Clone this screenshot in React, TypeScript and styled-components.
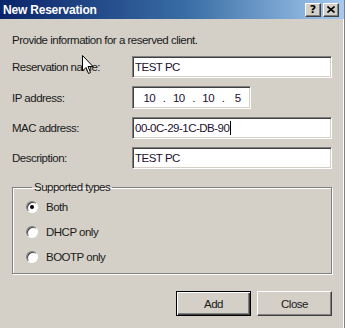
import styled, { createGlobalStyle } from "styled-components";

const GlobalStyle = createGlobalStyle`
  html, body {
    margin: 0;
    padding: 0;
    background: #d4d0c8;
  }
  body {
    font-family: "Liberation Sans", Arial, sans-serif;
  }
`;

const Window = styled.div`
  position: relative;
  box-sizing: border-box;
  display: flex;
  flex-direction: column;
  width: 345px;
  height: 328px;
  background: #d4d0c8;
  border-right: 1px solid #808080;
  box-shadow: inset -1px 0 0 #ffffff;
  overflow: hidden;
`;

const TitleBar = styled.div`
  display: flex;
  align-items: center;
  justify-content: space-between;
  height: 19px;
  padding: 0 4px 0 3px;
  background: linear-gradient(to right, #0a246a 0%, #3a6ea5 55%, #a6caf0 100%);
`;

const Title = styled.span`
  color: #ffffff;
  font-weight: bold;
  font-size: 12px;
  letter-spacing: -0.2px;
`;

const TitleButtons = styled.div`
  display: flex;
  gap: 2px;
  margin-right: 1px;
`;

const CaptionButton = styled.div`
  box-sizing: border-box;
  width: 16px;
  height: 14px;
  display: flex;
  align-items: center;
  justify-content: center;
  background: #d4d0c8;
  border-top: 1px solid #ffffff;
  border-left: 1px solid #ffffff;
  border-right: 1px solid #404040;
  border-bottom: 1px solid #404040;
  box-shadow: inset -1px -1px 0 #808080;
  font-family: "DejaVu Sans", sans-serif;
  font-weight: bold;
  font-size: 11px;
  line-height: 1;
  color: #000;
`;

const Body = styled.div`
  display: flex;
  flex-direction: column;
  padding: 14px 12px 0 12px;
  font-size: 11.5px;
  letter-spacing: -0.5px;
  color: #1a1a1a;
`;

const Intro = styled.div`
  height: 14px;
  line-height: 14px;
  margin-bottom: 9px;
`;

const Field = styled.div<{ $height?: number; $gap?: number }>`
  display: flex;
  align-items: center;
  height: ${(p) => p.$height ?? 22}px;
  margin-bottom: ${(p) => p.$gap ?? 8}px;
`;

const Label = styled.label`
  width: 120px;
  flex: none;
`;

const TextBox = styled.div<{ $width: number; $height?: number }>`
  box-sizing: border-box;
  width: ${(p) => p.$width}px;
  height: ${(p) => p.$height ?? 22}px;
  display: flex;
  align-items: center;
  padding: 0 2px;
  background: #ffffff;
  border-top: 1px solid #808080;
  border-left: 1px solid #808080;
  border-right: 1px solid #ffffff;
  border-bottom: 1px solid #ffffff;
  box-shadow: inset 1px 1px 0 #404040, inset -1px -1px 0 #d4d0c8;
  color: #1c1030;
  white-space: nowrap;
`;

const Caret = styled.span`
  display: inline-block;
  width: 1px;
  height: 14px;
  background: #000;
  margin-left: 1px;
`;

const Octet = styled.span`
  width: 21px;
  text-align: center;
`;

const Dot = styled.span`
  width: 9px;
  text-align: center;
`;

const Group = styled.fieldset`
  box-sizing: border-box;
  margin: 0;
  height: 93px;
  padding: 7px 0 0 13px;
  border: 1px solid #808080;
  box-shadow: 1px 1px 0 #ffffff, inset 1px 1px 0 #ffffff;
  display: flex;
  flex-direction: column;
  gap: 11px;
  min-inline-size: 0;
`;

const Legend = styled.legend`
  padding: 0 2px;
  margin-left: 6px;
`;

const RadioRow = styled.div`
  display: flex;
  align-items: center;
  gap: 8px;
  height: 14px;
`;

const Radio = styled.span<{ $checked?: boolean }>`
  box-sizing: border-box;
  position: relative;
  width: 12px;
  height: 12px;
  border-radius: 50%;
  background: #ffffff;
  border: 1px solid;
  border-color: #808080 #ffffff #ffffff #808080;
  box-shadow: inset 1px 1px 0 #404040;
  &::after {
    content: "";
    display: ${(p) => (p.$checked ? "block" : "none")};
    position: absolute;
    left: 3px;
    top: 3px;
    width: 4px;
    height: 4px;
    border-radius: 50%;
    background: #000;
  }
`;

const Buttons = styled.div`
  display: flex;
  justify-content: flex-end;
  gap: 6px;
  margin-top: 17px;
`;

const Button = styled.button<{ $default?: boolean }>`
  box-sizing: border-box;
  width: 75px;
  height: 25px;
  padding: 0;
  font-family: inherit;
  font-size: inherit;
  letter-spacing: inherit;
  color: #1a1a1a;
  background: #d4d0c8;
  border: 1px solid;
  border-color: ${(p) =>
    p.$default ? "#000" : "#ffffff #404040 #404040 #ffffff"};
  box-shadow: ${(p) =>
    p.$default
      ? "inset 1px 1px 0 #ffffff, inset -1px -1px 0 #404040, inset -2px -2px 0 #808080"
      : "inset -1px -1px 0 #808080"};
`;

const Cursor = styled.svg`
  position: absolute;
  left: 82px;
  top: 55px;
`;

export default function App() {
  return (
    <>
      <GlobalStyle />
      <Window>
        <TitleBar>
          <Title>New Reservation</Title>
          <TitleButtons>
            <CaptionButton>?</CaptionButton>
            <CaptionButton>
              <svg width="8" height="7" viewBox="0 0 8 7">
                <path d="M0.5 0.5 L7.5 6.5 M7.5 0.5 L0.5 6.5" stroke="#000" strokeWidth="1.6" />
              </svg>
            </CaptionButton>
          </TitleButtons>
        </TitleBar>
        <Body>
          <Intro>Provide information for a reserved client.</Intro>
          <Field>
            <Label>Reservation name:</Label>
            <TextBox $width={200}>TEST PC</TextBox>
          </Field>
          <Field $height={23}>
            <Label>IP address:</Label>
            <TextBox $width={119} $height={23}>
              <Octet style={{ marginLeft: 4 }}>10</Octet>
              <Dot>.</Dot>
              <Octet>10</Octet>
              <Dot>.</Dot>
              <Octet>10</Octet>
              <Dot>.</Dot>
              <Octet>5</Octet>
            </TextBox>
          </Field>
          <Field>
            <Label>MAC address:</Label>
            <TextBox $width={200}>
              00-0C-29-1C-DB-90
              <Caret />
            </TextBox>
          </Field>
          <Field $gap={12}>
            <Label>Description:</Label>
            <TextBox $width={200}>TEST PC</TextBox>
          </Field>
          <Group>
            <Legend>Supported types</Legend>
            <RadioRow>
              <Radio $checked />
              Both
            </RadioRow>
            <RadioRow>
              <Radio />
              DHCP only
            </RadioRow>
            <RadioRow>
              <Radio />
              BOOTP only
            </RadioRow>
          </Group>
          <Buttons>
            <Button $default>Add</Button>
            <Button>Close</Button>
          </Buttons>
        </Body>
        <Cursor width="12" height="20" viewBox="0 0 12 20">
          <path d="M0.5 0.5 L0.5 16 L4 12.5 L6.5 18.5 L8.5 17.5 L6 11.5 L11 11.5 Z" fill="#fff" stroke="#000" strokeWidth="1" />
        </Cursor>
      </Window>
    </>
  );
}
